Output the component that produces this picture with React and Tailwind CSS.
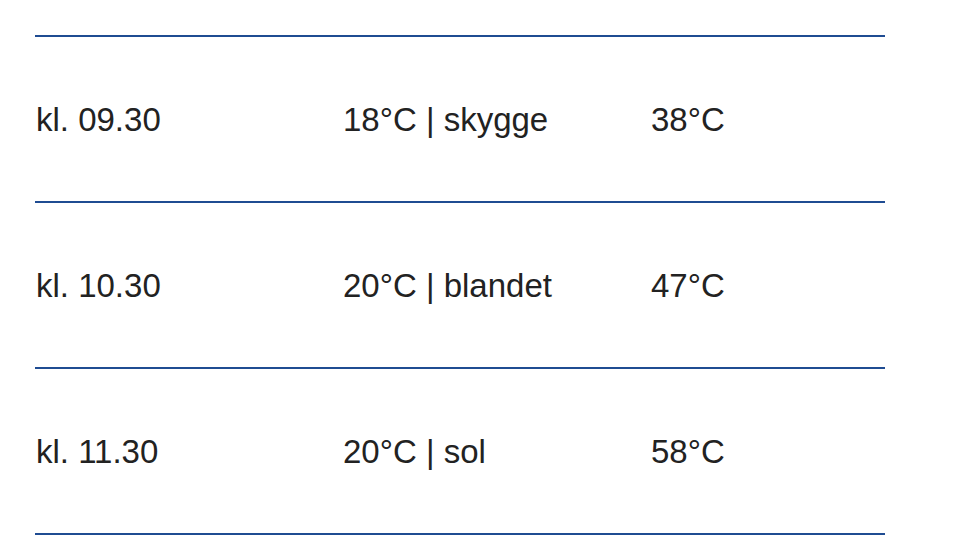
import React from 'react';

// måletider, lufttemperatur og overfladetemperatur
const rows = [
  { time: 'kl. 09.30', air: '18°C | skygge', surface: '38°C' },
  { time: 'kl. 10.30', air: '20°C | blandet', surface: '47°C' },
  { time: 'kl. 11.30', air: '20°C | sol', surface: '58°C' },
];

const App = () => {
  return (
    <div className="w-[960px] h-[548px] bg-white pt-[35px] pl-[35px] overflow-hidden">
      <div
        className="w-[850px] border-b-2 border-[#1f4c92] text-[33px] text-[#222] leading-none"
        style={{ fontFamily: '"Liberation Sans", Arial, sans-serif' }}
      >
        {rows.map((row) => (
          <div
            key={row.time}
            className="grid grid-cols-[307px_308px_1fr] items-center h-[166px] pl-px border-t-2 border-[#1f4c92]"
          >
            <span>{row.time}</span>
            <span>{row.air}</span>
            <span>{row.surface}</span>
          </div>
        ))}
      </div>
    </div>
  );
};

export default App;
